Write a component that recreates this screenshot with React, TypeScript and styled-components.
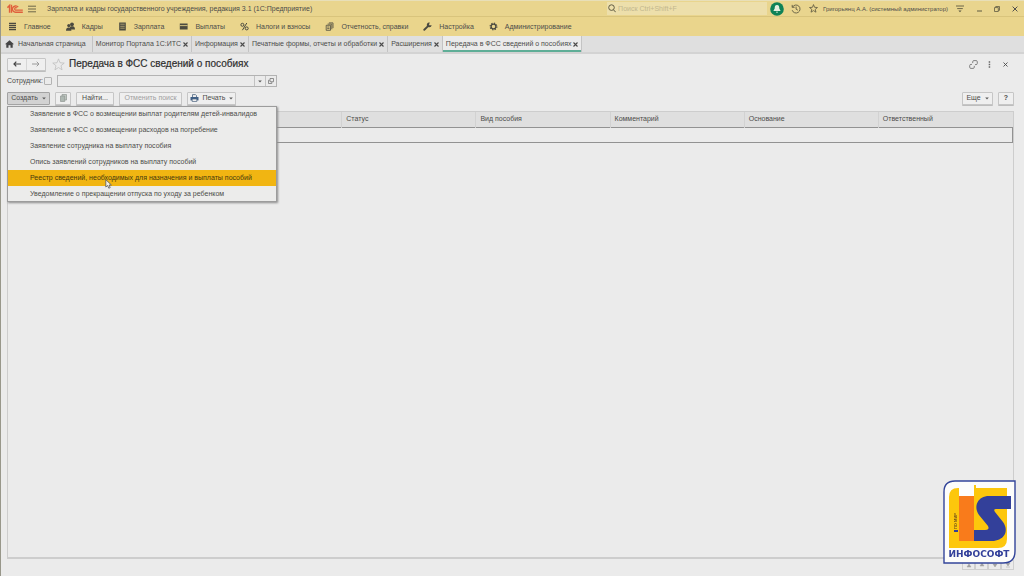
import React from "react";
import styled, { createGlobalStyle, css } from "styled-components";

const GlobalStyle = createGlobalStyle`
  * { box-sizing: border-box; }
  body {
    margin: 0;
    background: #ebebeb;
    color: #4c4c4a;
    font: 7px/10px "Liberation Sans", Arial, sans-serif;
  }
  button, input { font: inherit; color: inherit; margin: 0; padding: 0; }
  button { background: none; border: 0; display: inline-flex; align-items: center; justify-content: center; white-space: nowrap; }
  svg { display: block; flex: none; }
`;

const Page = styled.div`
  display: flex;
  flex-direction: column;
  min-height: 100vh;
  border-left: 1px solid #98978a;
`;

const TitleBar = styled.header`
  display: flex;
  align-items: center;
  height: 17px;
  padding-left: 6px;
  background: #e9d58e;
  border-top: 1px solid #e8dfb8;
  border-bottom: 1px solid #d9c47c;
`;

const AppName = styled.span`
  flex: 1;
  padding-left: 6px;
  white-space: nowrap;
`;

const SearchBox = styled.label`
  display: flex;
  align-items: center;
  gap: 2px;
  width: 160px;
  height: 13px;
  padding-left: 1px;
  background: #eddfab;
`;

const SearchInput = styled.input`
  flex: 1;
  min-width: 0;
  border: 0;
  outline: 0;
  background: transparent;
  &::placeholder { color: #c2b78e; opacity: 1; }
`;

const BarButton = styled.button<{ $w?: number }>`
  width: ${(p) => p.$w ?? 18}px;
  height: 15px;
`;

const UserName = styled.span`
  padding: 0 2px;
  font-size: 6px;
  white-space: nowrap;
`;

const SectionBar = styled.nav`
  display: flex;
  align-items: center;
  gap: 15px;
  height: 19px;
  padding-left: 7px;
  background: #ead58c;
`;

const SectionLink = styled.a`
  display: flex;
  align-items: center;
  gap: 7px;
  color: inherit;
  text-decoration: none;
  white-space: nowrap;
`;

const TabBar = styled.div`
  display: flex;
  height: 18px;
  background: #dfdfdf;
  border-bottom: 2px solid #d3d3d3;
`;

const Tab = styled.div<{ $active?: boolean; $home?: boolean }>`
  display: flex;
  align-items: center;
  gap: ${(p) => (p.$home ? 4 : 1)}px;
  height: 16px;
  padding: ${(p) => (p.$home ? "0 6px 0 4px" : "0 2px 0 3px")};
  white-space: nowrap;
  border-right: 1px solid #c4c4c4;
  ${(p) =>
    p.$active &&
    css`
      background: #ebebeb;
      box-shadow: inset 0 -2px 0 #5fae97;
    `}
`;

const TabClose = styled.button`
  width: 7px;
  height: 8px;
`;

const Form = styled.main`
  display: flex;
  flex-direction: column;
  flex: 1;
  padding: 0 10px 0 6px;
`;

const HeadRow = styled.div`
  display: flex;
  align-items: center;
  height: 20px;
`;

const buttonFrame = css`
  border: 1px solid #c6c6c6;
  border-radius: 1px;
  box-shadow: 0 1px 0 #bdbdbd;
  background: #efefef;
`;

const NavPair = styled.div`
  ${buttonFrame}
  display: flex;
  height: 13px;
  width: 39px;
`;

const NavButton = styled.button`
  flex: 1;
  & + & { border-left: 1px solid #d6d6d6; }
`;

const FavButton = styled.button`
  width: 14px;
  margin: 0 4px 0 5px;
`;

const Title = styled.h1`
  flex: 1;
  margin: 0;
  font-size: 10px;
  line-height: 14px;
  font-weight: 400;
  color: #2e2e2e;
  -webkit-text-stroke: 0.2px #2e2e2e;
`;

const FilterRow = styled.div`
  display: flex;
  align-items: center;
  height: 14px;
`;

const Check = styled.input`
  appearance: none;
  width: 8px;
  height: 8px;
  border: 1px solid #b3b3b3;
  border-radius: 1px;
`;

const CheckLabel = styled.label`
  display: flex;
  align-items: center;
  justify-content: space-between;
  width: 45px;
`;

const Combo = styled.div`
  display: flex;
  width: 220px;
  height: 12px;
  margin-left: 5px;
  border: 1px solid #b3b3b3;
`;

const ComboInput = styled.input`
  flex: 1;
  min-width: 0;
  border: 0;
  outline: 0;
  background: transparent;
`;

const ComboButton = styled.button`
  width: 11px;
  border-left: 1px solid #c2c2c2;
`;

const Toolbar = styled.div`
  display: flex;
  align-items: center;
  gap: 5px;
  height: 23px;
  padding-bottom: 3px;
`;

const ToolButton = styled.button<{ $w: number; $pressed?: boolean; $muted?: boolean }>`
  ${buttonFrame}
  width: ${(p) => p.$w}px;
  height: 13px;
  gap: 4px;
  ${(p) =>
    p.$pressed &&
    css`
      background: #d2d2d2;
      border-color: #a3a3a3;
      box-shadow: none;
    `}
  ${(p) => p.$muted && "color: #a0a0a0;"}
`;

const Spacer = styled.span`
  flex: 1;
`;

const MenuAnchor = styled.div`
  position: relative;
  display: flex;
`;

const Menu = styled.div`
  position: absolute;
  z-index: 2;
  top: 14px;
  left: 0;
  width: 270px;
  background: #ececeb;
  outline: 1px solid #9c9c9c;
  outline-offset: -1px;
  box-shadow: 1px 1px 2px #8c8c8c;
`;

const MenuItem = styled.button<{ $active?: boolean }>`
  width: 100%;
  height: 16px;
  padding-left: 23px;
  justify-content: flex-start;
  ${(p) => p.$active && "background: #f1b512; color: #46390e;"}
`;

const Pointer = styled.svg`
  position: absolute;
  z-index: 3;
  top: 87px;
  left: 98px;
`;

const List = styled.section`
  flex: 1;
  border: 1px solid #cdcdcd;
  border-bottom-width: 2px;
`;

const Table = styled.table`
  width: 100%;
  table-layout: fixed;
  border-collapse: collapse;
  tr { height: 15px; }
  th, td { padding: 0 0 0 4px; }
  th {
    text-align: left;
    font-weight: 400;
    background: #dfdfdf;
  }
  th + th { border-left: 1px solid #d2d2d2; }
  td { border: 1px solid #929292; }
`;

const Footer = styled.footer`
  display: flex;
  justify-content: flex-end;
  height: 17px;
  padding-top: 1px;
`;

const PageButton = styled.button`
  width: 13px;
  height: 10px;
  border: 1px solid #cfcfcf;
`;

const Watermark = styled.svg`
  position: fixed;
  z-index: 4;
  right: 8px;
  bottom: 12px;
`;

const Cross = ({ size = 5, w = 1.1 }: { size?: number; w?: number }) => (
  <svg width={size} height={size} viewBox="0 0 5 5" stroke="#4a4a4a" strokeWidth={w}>
    <path d="M.5 .5 4.5 4.5M4.5 .5 .5 4.5" />
  </svg>
);

const Caret = () => (
  <svg width="4" height="3" viewBox="0 0 4 3" fill="#5a5a5a">
    <path d="M.2 .4h3.6L2 2.6z" />
  </svg>
);

const Star = ({ size, color, w }: { size: number; color: string; w: number }) => (
  <svg width={size} height={size} viewBox="0 0 12 12" fill="none" stroke={color} strokeWidth={w}>
    <path d="M6 .8 7.4 4.4 11.3 4.7 8.3 7.1 9.3 10.9 6 8.8 2.7 10.9 3.7 7.1 .7 4.7 4.6 4.4z" />
  </svg>
);

const BrandMark = () => (
  <svg width="16" height="10" viewBox="0 0 16 10" fill="none" stroke="#e0603c">
    <path d="M.4 3.6 2.6 1.4V8.8" strokeWidth="1.5" />
    <path d="M4.5 .8V8.8" strokeWidth="1.4" />
    <path d="M11.2 3.2A3.2 3.2 0 1 0 8.9 8.3H15.8" strokeWidth="1.4" />
    <path d="M9.9 4A1.3 1.3 0 1 0 8.9 6.2H15.8" strokeWidth="1.2" />
  </svg>
);

const Icon = ({ name }: { name: string }) => {
  const c = "#4b4a40";
  const body: Record<string, React.ReactNode> = {
    main: <path d="M1 1.3h7M1 3.4h7M1 5.5h7M1 7.6h7" stroke={c} strokeWidth="1.3" />,
    people: (
      <g fill={c}>
        <circle cx="6" cy="2.3" r="1.9" />
        <path d="M3.6 7.5c0-2.8 1-3.2 2.4-3.2s3 .5 3 3.2z" />
        <circle cx="2.8" cy="3.6" r="1.6" />
        <path d="M0 8.8c0-2.7 1-3.3 2.7-3.3S5.4 6.1 5.4 8.8z" />
      </g>
    ),
    calc: (
      <g>
        <path d="M1.2 .5h6.6v8H1.2z" fill={c} />
        <path d="M2.3 2.2h4.4M2.3 4.3h4.4M2.3 6.2h4.4" stroke="#cdbb80" strokeWidth=".7" />
      </g>
    ),
    card: (
      <g>
        <path d="M.8 1.5h7.8v6H.8z" fill={c} />
        <path d="M.8 3.6h7.8" stroke="#dcc985" strokeWidth=".9" />
      </g>
    ),
    percent: (
      <g fill="none" stroke={c} strokeWidth="1">
        <circle cx="2.4" cy="2.8" r="1.5" />
        <circle cx="6.7" cy="6.4" r="1.5" />
        <path d="M6.8 1 2.4 8.2" />
      </g>
    ),
    docs: (
      <g fill="none" stroke={c} strokeWidth=".8">
        <path d="M3.9 .9H8v5.2M2.6 2.1h4.2v5.2M1.2 3.3h4.3v5H1.2z" />
        <path d="M2.2 5h2.3M2.2 6.6h2.3" />
      </g>
    ),
    wrench: (
      <g>
        <path d="M1.3 7.8 5.3 3.9" stroke={c} strokeWidth="1.9" strokeLinecap="round" />
        <path d="M6.8 .6A2.4 2.4 0 1 0 8.6 3L6.7 3.4 6 2.4z" fill={c} />
      </g>
    ),
    gear: (
      <g fill="none" stroke={c}>
        <circle cx="4.5" cy="4.5" r="2.4" strokeWidth="1.3" />
        <circle cx="4.5" cy="4.5" r="3.4" strokeWidth="1.1" strokeDasharray="1.33 1.34" />
      </g>
    ),
  };
  return (
    <svg width="9" height="9" viewBox="0 0 9 9" aria-hidden="true">
      {body[name]}
    </svg>
  );
};

const sections = [
  ["main", "Главное"],
  ["people", "Кадры"],
  ["calc", "Зарплата"],
  ["card", "Выплаты"],
  ["percent", "Налоги и взносы"],
  ["docs", "Отчетность, справки"],
  ["wrench", "Настройка"],
  ["gear", "Администрирование"],
];

const tabs = [
  "Монитор Портала 1С:ИТС",
  "Информация",
  "Печатные формы, отчеты и обработки",
  "Расширения",
  "Передача в ФСС сведений о пособиях",
];

const menuItems = [
  "Заявление в ФСС о возмещении выплат родителям детей-инвалидов",
  "Заявление в ФСС о возмещении расходов на погребение",
  "Заявление сотрудника на выплату пособия",
  "Опись заявлений сотрудников на выплату пособий",
  "Реестр сведений, необходимых для назначения и выплаты пособий",
  "Уведомление о прекращении отпуска по уходу за ребенком",
];

const columns = ["", "Статус", "Вид пособия", "Комментарий", "Основание", "Ответственный"];

const pageMarks = ["M1 1h4M3 2 1 5h4z", "M3 1 1 4h4z", "M3 5 1 2h4z", "M1 5h4M3 4 1 1h4z"];

export default function App() {
  return (
    <>
      <GlobalStyle />
      <Page>
        <TitleBar>
          <BrandMark />
          <BarButton aria-label="Меню">
            <svg width="8" height="8" viewBox="0 0 8 8" stroke="#5f5a42" strokeWidth=".9">
              <path d="M0 1.2h8M0 4h8M0 6.8h8" />
            </svg>
          </BarButton>
          <AppName>Зарплата и кадры государственного учреждения, редакция 3.1 (1С:Предприятие)</AppName>
          <SearchBox>
            <svg width="8" height="9" viewBox="0 0 8 9" fill="none" stroke="#5f5a42" strokeWidth="1">
              <circle cx="3.5" cy="3.6" r="2.8" />
              <path d="m5.5 5.8 2.2 2.4" />
            </svg>
            <SearchInput aria-label="Поиск" placeholder="Поиск Ctrl+Shift+F" />
          </SearchBox>
          <BarButton $w={20} aria-label="Уведомления">
            <svg width="14" height="14" viewBox="0 0 14 14">
              <circle cx="7" cy="7" r="6.8" fill="#0f8257" />
              <path d="M7 3.1c2 0 2.2 1.6 2.3 3.4L10.6 9H3.4l1.3-2.5C4.8 4.7 5 3.1 7 3.1zM6 9.7h2a1 1 0 0 1-2 0z" fill="#e6efe0" />
            </svg>
          </BarButton>
          <BarButton aria-label="История">
            <svg width="10" height="10" viewBox="0 0 10 10" fill="none" stroke="#5f5a42" strokeWidth=".9">
              <path d="M1.5 3.1A4 4 0 1 1 1.2 6.2M1.2 .9v2.4h2.4M5.1 2.6V5.2L6.9 6.2" />
            </svg>
          </BarButton>
          <BarButton $w={16} aria-label="Избранное">
            <Star size={9} color="#5f5a42" w={1.1} />
          </BarButton>
          <UserName>Григорьянц А.А. (системный администратор)</UserName>
          <BarButton $w={20} aria-label="Настройки">
            <svg width="8" height="8" viewBox="0 0 8 8" stroke="#5f5a42" strokeWidth=".9">
              <path d="M0 1h8M1.2 3.6h5.6" />
              <path d="M2.4 5.6h3.2L4 7.3z" fill="#5f5a42" stroke="none" />
            </svg>
          </BarButton>
          <BarButton aria-label="Свернуть">
            <svg width="5" height="6" viewBox="0 0 5 6" stroke="#5f5a42">
              <path d="M0 5h5" />
            </svg>
          </BarButton>
          <BarButton aria-label="Развернуть">
            <svg width="6" height="6" viewBox="0 0 6 6" fill="none" stroke="#5f5a42" strokeWidth=".8">
              <path d="M.5 1.6h3.8v3.9H.5zM1.7 1.5V.5h3.8v3.8H4.4" />
            </svg>
          </BarButton>
          <BarButton aria-label="Закрыть">
            <Cross size={6} w={0.8} />
          </BarButton>
        </TitleBar>

        <SectionBar>
          {sections.map(([icon, label]) => (
            <SectionLink href="#" key={label}>
              <Icon name={icon} />
              {label}
            </SectionLink>
          ))}
        </SectionBar>

        <TabBar>
          <Tab $home>
            <svg width="9" height="8" viewBox="0 0 9 8" fill="#444">
              <path d="M4.5 .3 9 4.2H7.7V7.7H5.5V5.2h-2v2.5H1.3V4.2H0z" />
            </svg>
            Начальная страница
          </Tab>
          {tabs.map((label, i) => (
            <Tab key={label} $active={i === tabs.length - 1}>
              {label}
              <TabClose aria-label={`Закрыть: ${label}`}>
                <Cross />
              </TabClose>
            </Tab>
          ))}
        </TabBar>

        <Form>
          <HeadRow>
            <NavPair>
              <NavButton aria-label="Назад">
                <svg width="8" height="6" viewBox="0 0 8 6" fill="none" stroke="#444" strokeWidth="1.2">
                  <path d="M8 3H1M3.3 .7 1 3l2.3 2.3" />
                </svg>
              </NavButton>
              <NavButton aria-label="Вперед">
                <svg width="8" height="6" viewBox="0 0 8 6" fill="none" stroke="#9a9a9a" strokeWidth="1">
                  <path d="M0 3h7M4.7 .7 7 3 4.7 5.3" />
                </svg>
              </NavButton>
            </NavPair>
            <FavButton aria-label="В избранное">
              <Star size={13} color="#bdbdbd" w={0.7} />
            </FavButton>
            <Title>Передача в ФСС сведений о пособиях</Title>
            <BarButton aria-label="Ссылка">
              <svg width="9" height="9" viewBox="0 0 9 9" fill="none" stroke="#777" strokeWidth=".9">
                <path d="M3.7 3.1V1.8a1.2 1.2 0 0 1 1.2-1.2h2.2a1.2 1.2 0 0 1 1.2 1.2v1.6a1.2 1.2 0 0 1-1.2 1.2H6M5.3 5.9v1.3a1.2 1.2 0 0 1-1.2 1.2H1.9A1.2 1.2 0 0 1 .7 7.2V5.6a1.2 1.2 0 0 1 1.2-1.2H3" />
              </svg>
            </BarButton>
            <BarButton $w={14} aria-label="Дополнительно">
              <svg width="3" height="7" viewBox="0 0 3 7" fill="#666">
                <path d="M.7 .2h1.5v1.5H.7zM.7 2.7h1.5v1.5H.7zM.7 5.2h1.5v1.5H.7z" />
              </svg>
            </BarButton>
            <BarButton aria-label="Закрыть форму">
              <Cross w={0.9} />
            </BarButton>
          </HeadRow>

          <FilterRow>
            <CheckLabel>
              Сотрудник:
              <Check type="checkbox" />
            </CheckLabel>
            <Combo>
              <ComboInput aria-label="Сотрудник" />
              <ComboButton aria-label="Выбрать">
                <Caret />
              </ComboButton>
              <ComboButton aria-label="Открыть">
                <svg width="6" height="6" viewBox="0 0 6 6" fill="none" stroke="#777" strokeWidth=".8">
                  <path d="M2 .5h3.5v3.2H2zM1.7 2.3H.5v3.2h3.3V4" />
                </svg>
              </ComboButton>
            </Combo>
          </FilterRow>

          <Toolbar>
            <MenuAnchor>
              <ToolButton $w={43} $pressed aria-haspopup="menu" aria-expanded="true">
                Создать
                <Caret />
              </ToolButton>
              <Menu role="menu">
                {menuItems.map((label, i) => (
                  <MenuItem role="menuitem" key={label} $active={i === 4}>
                    {label}
                  </MenuItem>
                ))}
              </Menu>
              <Pointer width="8" height="10" viewBox="0 0 8 10" fill="#f4f1e6" stroke="#55585e" strokeWidth=".8">
                <path d="M.8 .7V8L2.6 6.5 3.8 9.2 5.2 8.6 4.1 6h2.3z" />
              </Pointer>
            </MenuAnchor>
            <ToolButton $w={16} aria-label="Скопировать">
              <svg width="7" height="8" viewBox="0 0 7 8">
                <path d="M2 .5h4.5v5.5H2z" fill="#c2c9c4" stroke="#8f9692" strokeWidth=".7" />
                <path d="M.5 2h4.2v5.5H.5z" fill="#aeb8b2" stroke="#8f9692" strokeWidth=".7" />
              </svg>
            </ToolButton>
            <ToolButton $w={38}>Найти...</ToolButton>
            <ToolButton $w={63} $muted>
              Отменить поиск
            </ToolButton>
            <ToolButton $w={49}>
              <svg width="9" height="8" viewBox="0 0 9 8">
                <path d="M2.5 3V.6h3L6.5 1.6V3" fill="#eee" stroke="#4d6480" strokeWidth=".8" />
                <path d="M.5 3h8v3.4h-8z" fill="#3f5f86" />
                <path d="M2.2 5h4.6v2.5H2.2z" fill="#eee" stroke="#4d6480" strokeWidth=".7" />
              </svg>
              Печать
              <Caret />
            </ToolButton>
            <Spacer />
            <ToolButton $w={31}>
              Еще
              <Caret />
            </ToolButton>
            <ToolButton $w={16}>
              <b>?</b>
            </ToolButton>
          </Toolbar>

          <List>
            <Table>
              <colgroup>
                <col style={{ width: "33.2%" }} />
              </colgroup>
              <thead>
                <tr>
                  {columns.map((c) => (
                    <th key={c} scope="col">
                      {c}
                    </th>
                  ))}
                </tr>
              </thead>
              <tbody>
                <tr>
                  <td colSpan={columns.length} />
                </tr>
              </tbody>
            </Table>
          </List>

          <Footer>
            {pageMarks.map((d, i) => (
              <PageButton key={d} aria-label={["В начало", "Вверх", "Вниз", "В конец"][i]}>
                <svg width="6" height="6" viewBox="0 0 6 6" fill="#a0a0a0" stroke="#a0a0a0" strokeWidth=".5">
                  <path d={d} />
                </svg>
              </PageButton>
            ))}
          </Footer>
        </Form>

        <Watermark width="73" height="84" viewBox="0 0 73 84" role="img" aria-label="Инфософт">
          <path d="M12 1H72V71q0 12-12 12H1V12Q1 1 12 1z" fill="#fdfdfb" stroke="#33459a" strokeWidth="1.4" />
          <path d="M33 8H64V59q0 9-9 9H6V17q0-9 9-9h1V16H31V5h2z" fill="#fdc70c" />
          <path d="M16 16h15v45H16z" fill="#f97b1b" />
          <path d="M68 16V29H53q-3 0-1 3l8 10C67 52 60 61 49 61H31V50H42q5 0 3-4l-9-11C30 26 35 16 46 16z" fill="#33409a" />
          <path d="M11 50h4v2h-4z" fill="#33409a" />
          <text x="14" y="49" transform="rotate(-90 14 49)" fontSize="4" fontWeight="700" fill="#6b4a1c">
            ПО МИР
          </text>
          <text x="36" y="77" textAnchor="middle" fontFamily="DejaVu Sans, sans-serif" fontSize="9" fontWeight="700" fill="#33409a">
            ИНФОСОФТ
          </text>
        </Watermark>
      </Page>
    </>
  );
}
